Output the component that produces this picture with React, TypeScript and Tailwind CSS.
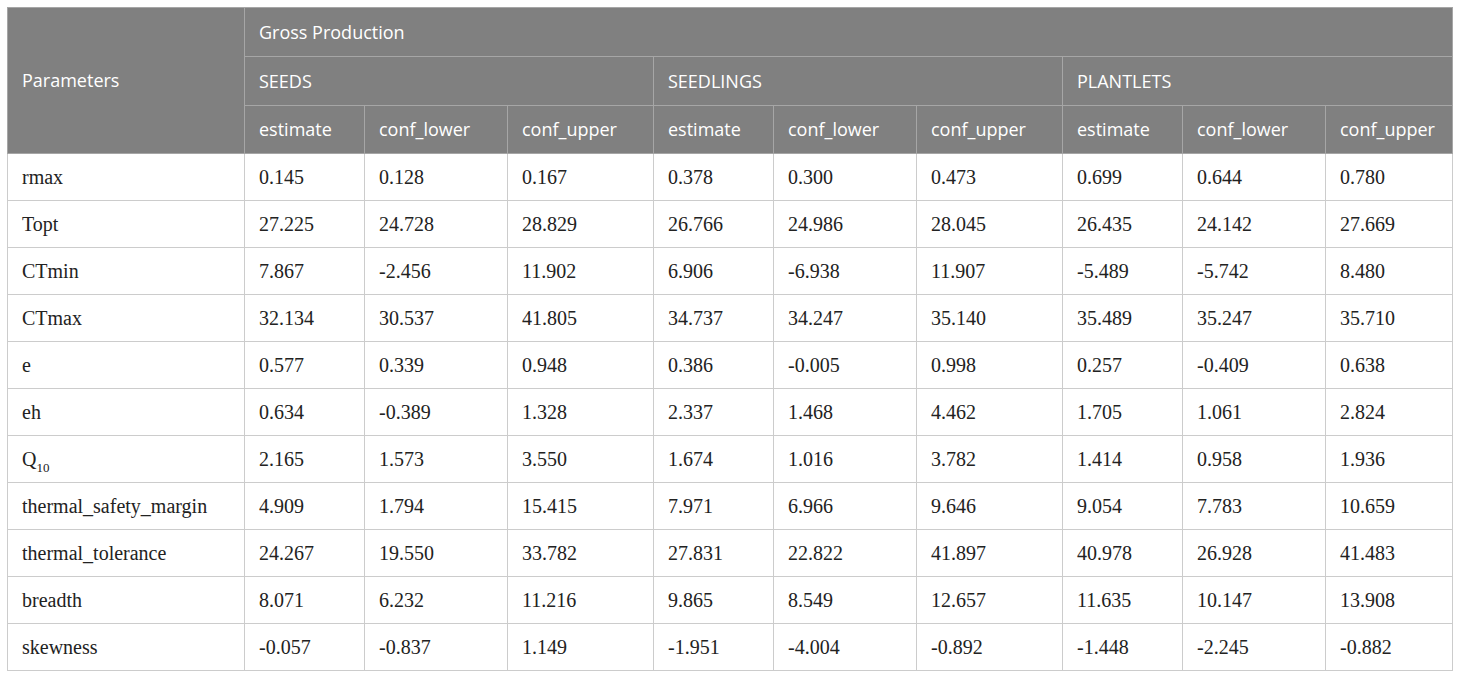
import React from "react";

const widths = [237, 120, 143, 146, 120, 143, 146, 120, 143, 127];

const rows: { label: React.ReactNode; values: string[] }[] = [
  { label: "rmax", values: ["0.145", "0.128", "0.167", "0.378", "0.300", "0.473", "0.699", "0.644", "0.780"] },
  { label: "Topt", values: ["27.225", "24.728", "28.829", "26.766", "24.986", "28.045", "26.435", "24.142", "27.669"] },
  { label: "CTmin", values: ["7.867", "-2.456", "11.902", "6.906", "-6.938", "11.907", "-5.489", "-5.742", "8.480"] },
  { label: "CTmax", values: ["32.134", "30.537", "41.805", "34.737", "34.247", "35.140", "35.489", "35.247", "35.710"] },
  { label: "e", values: ["0.577", "0.339", "0.948", "0.386", "-0.005", "0.998", "0.257", "-0.409", "0.638"] },
  { label: "eh", values: ["0.634", "-0.389", "1.328", "2.337", "1.468", "4.462", "1.705", "1.061", "2.824"] },
  {
    label: (
      <>
        Q<sub className="text-[13px] align-[-3px]">10</sub>
      </>
    ),
    values: ["2.165", "1.573", "3.550", "1.674", "1.016", "3.782", "1.414", "0.958", "1.936"],
  },
  { label: "thermal_safety_margin", values: ["4.909", "1.794", "15.415", "7.971", "6.966", "9.646", "9.054", "7.783", "10.659"] },
  { label: "thermal_tolerance", values: ["24.267", "19.550", "33.782", "27.831", "22.822", "41.897", "40.978", "26.928", "41.483"] },
  { label: "breadth", values: ["8.071", "6.232", "11.216", "9.865", "8.549", "12.657", "11.635", "10.147", "13.908"] },
  { label: "skewness", values: ["-0.057", "-0.837", "1.149", "-1.951", "-4.004", "-0.892", "-1.448", "-2.245", "-0.882"] },
];

const th = "border border-[#a6a6a6] px-[14px] text-left align-middle font-normal";
const td = "border border-[#cccccc] px-[14px] text-left align-middle";

export default function App() {
  return (
    <div className="bg-white w-[1460px] h-[678px] pt-[7px] pl-[7px]">
      <table
        className="table-fixed border-collapse w-[1445px]"
        style={{ fontFamily: "'Open Sans', sans-serif" }}
      >
        <colgroup>
          {widths.map((w, i) => (
            <col key={i} style={{ width: w }} />
          ))}
        </colgroup>
        <thead className="bg-[#808080] text-white text-[18px]">
          <tr className="h-[49px]">
            <th rowSpan={3} className={th}>
              Parameters
            </th>
            <th colSpan={9} className={th}>
              Gross Production
            </th>
          </tr>
          <tr className="h-[49px]">
            <th colSpan={3} className={th}>SEEDS</th>
            <th colSpan={3} className={th}>SEEDLINGS</th>
            <th colSpan={3} className={th}>PLANTLETS</th>
          </tr>
          <tr className="h-[48px]">
            {Array.from({ length: 3 }).flatMap((_, g) =>
              ["estimate", "conf_lower", "conf_upper"].map((h) => (
                <th key={g + h} className={th}>
                  {h}
                </th>
              ))
            )}
          </tr>
        </thead>
        <tbody
          className="text-[#222222] text-[20px]"
          style={{ fontFamily: "'Liberation Serif', serif" }}
        >
          {rows.map((r, i) => (
            <tr key={i} className="h-[47px]">
              <td className={td}>{r.label}</td>
              {r.values.map((v, j) => (
                <td key={j} className={td}>
                  {v}
                </td>
              ))}
            </tr>
          ))}
        </tbody>
      </table>
    </div>
  );
}
